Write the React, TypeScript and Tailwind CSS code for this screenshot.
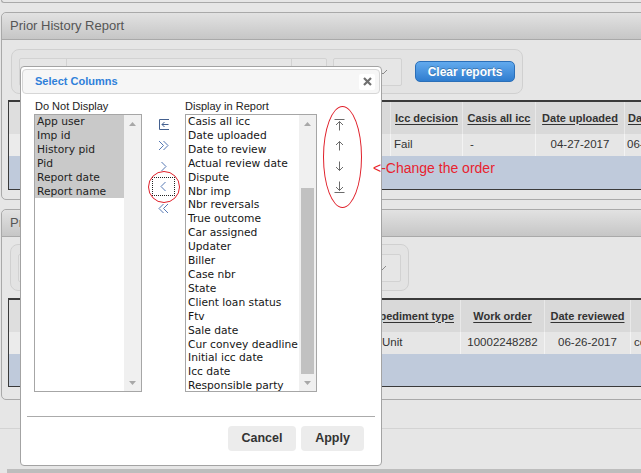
import React from "react";

const leftItems = ["App user", "Imp id", "History pid", "Pid", "Report date", "Report name"];
const rightItems = [
  "Casis all icc", "Date uploaded", "Date to review", "Actual review date", "Dispute", "Nbr imp",
  "Nbr reversals", "True outcome", "Car assigned", "Updater", "Biller", "Case nbr", "State",
  "Client loan status", "Ftv", "Sale date", "Cur convey deadline", "Initial icc date", "Icc date",
  "Responsible party",
];

function UpTri() {
  return (
    <svg width="7" height="4" viewBox="0 0 7 4">
      <path d="M0 4 L3.5 0 L7 4Z" fill="#a8a8a8" />
    </svg>
  );
}
function DownTri() {
  return (
    <svg width="7" height="4" viewBox="0 0 7 4">
      <path d="M0 0 L3.5 4 L7 0Z" fill="#a8a8a8" />
    </svg>
  );
}

function Scrollbar({ thumbTop, thumbH }: { thumbTop?: number; thumbH?: number }) {
  return (
    <div className="w-[17px] h-full bg-[#f0f0f0] flex flex-col">
      <div className="h-[17px] flex items-center justify-center">
        <UpTri />
      </div>
      <div className="flex-1 relative">
        {thumbH ? (
          <div
            className="absolute left-[2px] w-[13px] bg-[#c1c1c1]"
            style={{ top: thumbTop, height: thumbH }}
          />
        ) : null}
      </div>
      <div className="h-[17px] flex items-center justify-center">
        <DownTri />
      </div>
    </div>
  );
}

const chevColor = "#5578b4";

function IconReset() {
  return (
    <svg width="12" height="11" viewBox="0 0 12 11" fill="none" stroke="#44608f" strokeWidth="1">
      <path d="M1.5 0.5 H11" />
      <path d="M1.5 0.5 V10.5 H11" />
      <path d="M10.5 5.5 H4" />
      <path d="M6.5 3 L4 5.5 L6.5 8" />
    </svg>
  );
}
function DoubleRight() {
  return (
    <svg width="11" height="11" viewBox="0 0 11 11" fill="none" stroke={chevColor} strokeWidth="1">
      <path d="M1 1 L5.5 5.5 L1 10" />
      <path d="M5.5 1 L10 5.5 L5.5 10" />
    </svg>
  );
}
function DoubleLeft() {
  return (
    <svg width="11" height="11" viewBox="0 0 11 11" fill="none" stroke={chevColor} strokeWidth="1">
      <path d="M10 1 L5.5 5.5 L10 10" />
      <path d="M5.5 1 L1 5.5 L5.5 10" />
    </svg>
  );
}
function SingleRight() {
  return (
    <svg width="7" height="11" viewBox="0 0 7 11" fill="none" stroke={chevColor} strokeWidth="1">
      <path d="M1.5 1 L6 5.5 L1.5 10" />
    </svg>
  );
}
function SingleLeft() {
  return (
    <svg width="7" height="11" viewBox="0 0 7 11" fill="none" stroke={chevColor} strokeWidth="1">
      <path d="M5.5 1 L1 5.5 L5.5 10" />
    </svg>
  );
}

const arrowColor = "#6b6b6b";
function ToTop() {
  return (
    <svg width="11" height="13" viewBox="0 0 11 13" fill="none" stroke={arrowColor} strokeWidth="1">
      <path d="M0.5 1.5 H10.5" />
      <path d="M5.5 3.5 V12.5" />
      <path d="M2 7 L5.5 3.5 L9 7" />
    </svg>
  );
}
function Up() {
  return (
    <svg width="11" height="11" viewBox="0 0 11 11" fill="none" stroke={arrowColor} strokeWidth="1">
      <path d="M5.5 1.5 V10.5" />
      <path d="M2 5 L5.5 1.5 L9 5" />
    </svg>
  );
}
function Down() {
  return (
    <svg width="11" height="11" viewBox="0 0 11 11" fill="none" stroke={arrowColor} strokeWidth="1">
      <path d="M5.5 0.5 V9.5" />
      <path d="M2 6 L5.5 9.5 L9 6" />
    </svg>
  );
}
function ToBottom() {
  return (
    <svg width="11" height="13" viewBox="0 0 11 13" fill="none" stroke={arrowColor} strokeWidth="1">
      <path d="M5.5 0.5 V9.5" />
      <path d="M2 6 L5.5 9.5 L9 6" />
      <path d="M0.5 11.5 H10.5" />
    </svg>
  );
}

function HeaderCell({ w, children, align = "center" }: { w: string; children?: React.ReactNode; align?: string }) {
  const al =
    align === "end" ? "justify-end pr-[6px]" : align === "start" ? "justify-start pl-[3px]" : "justify-center";
  return (
    <div className={`${w} shrink-0 h-full flex items-center border-r border-[#e8e8e8] whitespace-nowrap ${al}`}>
      <span className="underline underline-offset-2">{children}</span>
    </div>
  );
}

function DataCell({ w, children, pl }: { w: string; children?: React.ReactNode; pl?: string }) {
  return (
    <div
      className={`${w} shrink-0 h-full flex items-center border-r border-[#f3f3f3] whitespace-nowrap ${
        pl ? pl : "justify-center"
      }`}
    >
      {children}
    </div>
  );
}

function PanelHeader({ title }: { title: string }) {
  return (
    <div className="h-[27px] border-b border-[#a9a9a9] rounded-t-[5px] bg-gradient-to-b from-[#e2e2e2] to-[#c6c6c6] flex items-center pl-[8px] text-[13px] text-[#555]">
      {title}
    </div>
  );
}

function SelectBox() {
  return (
    <div className="relative w-[69px] h-[28px] border border-[#d2d2d2] rounded-[2px] bg-[#e6e6e6]">
      <svg className="absolute left-[44px] top-[10px]" width="10" height="6" viewBox="0 0 10 6" fill="none" stroke="#8a8a8a" strokeWidth="1">
        <path d="M1 1 L5 5 L9 1" />
      </svg>
    </div>
  );
}

export default function App() {
  return (
    <div className="relative w-[641px] h-[473px] overflow-hidden bg-[#e6e6e6] font-['Liberation_Sans',Arial,sans-serif]">
      {/* top strip: end of previous panel */}
      <div className="ml-[1px] w-[660px] h-[3px] border-b border-l border-[#a9a9a9] rounded-bl-[4px]" />
      <div className="h-[9px]" />

      {/* Panel 1 */}
      <div className="ml-[1px] w-[660px] h-[188px] border border-[#a9a9a9] rounded-[5px] bg-[#e6e6e6] overflow-hidden">
        <PanelHeader title="Prior History Report" />
        <div className="pt-[9px]">
          <div className="ml-[9px] w-[512px] h-[45px] border border-[#d0d0d0] rounded-[8px] bg-[#e3e3e3] flex items-center pl-[7px]">
            <div className="flex h-[28px] border border-[#d2d2d2] rounded-[2px] bg-[#e6e6e6]">
              <div className="w-[47px] border-r border-[#d2d2d2]" />
              <div className="w-[225px] border-r border-[#d2d2d2]" />
              <div className="w-[34px]" />
            </div>
            <div className="ml-[6px]">
              <SelectBox />
            </div>
            <div className="ml-[13px] w-[100px] h-[21px] rounded-[5px] border border-[#2b6fb8] bg-gradient-to-b from-[#62aaee] to-[#2f7dcf] flex items-center justify-center text-white font-bold text-[12px] [text-shadow:0_-1px_0_rgba(0,0,0,0.25)]">
              Clear reports
            </div>
          </div>
          <div className="mt-[6px] ml-[6px] w-[660px] border-t-2 border-l border-b border-[#3a3a3a] bg-[#bfcadb]">
            <div className="flex h-[32px] bg-[#d9d9d9] text-[11px] font-bold text-[#333]">
              <div className="w-[13px] shrink-0 border-r border-[#ececec] bg-[#dedede]" />
              <div className="w-[369px] shrink-0 border-r border-[#e8e8e8]" />
              <HeaderCell w="w-[72px]">Icc decision</HeaderCell>
              <HeaderCell w="w-[73px]">Casis all icc</HeaderCell>
              <HeaderCell w="w-[89px]">Date uploaded</HeaderCell>
              <HeaderCell w="w-[80px]" align="start">Date reviewed</HeaderCell>
            </div>
            <div className="flex h-[22px] bg-[#e6e6e6] text-[11.5px] text-[#333]">
              <div className="w-[13px] shrink-0 border-r border-[#f3f3f3] bg-[#ebebeb]" />
              <div className="w-[369px] shrink-0 border-r border-[#f3f3f3]" />
              <DataCell w="w-[72px]" pl="pl-[3px]">Fail</DataCell>
              <DataCell w="w-[73px]" pl="pl-[7px]">-</DataCell>
              <DataCell w="w-[89px]">04-27-2017</DataCell>
              <DataCell w="w-[80px]" pl="pl-[2px]">06-26-2017</DataCell>
            </div>
            <div className="h-[33px]" />
          </div>
        </div>
      </div>

      <div className="h-[9px]" />

      {/* Panel 2 */}
      <div className="ml-[1px] w-[660px] h-[191px] border border-[#a9a9a9] rounded-[5px] bg-[#e6e6e6] overflow-hidden">
        <PanelHeader title="Prior Impediments" />
        <div className="pt-[7px]">
          <div className="ml-[8px] w-[399px] h-[47px] border border-[#d0d0d0] rounded-[8px] bg-[#e3e3e3] flex items-center pl-[7px]">
            <div className="flex h-[28px] border border-[#d2d2d2] rounded-[2px] bg-[#e6e6e6]">
              <div className="w-[47px] border-r border-[#d2d2d2]" />
              <div className="w-[225px] border-r border-[#d2d2d2]" />
              <div className="w-[34px]" />
            </div>
            <div className="ml-[6px]">
              <SelectBox />
            </div>
          </div>
          <div className="mt-[7px] ml-[6px] w-[660px] border-t-2 border-l border-b border-[#3a3a3a] bg-[#bfcadb]">
            <div className="flex h-[32px] bg-[#d9d9d9] text-[11px] font-bold text-[#333]">
              <div className="w-[13px] shrink-0 border-r border-[#ececec] bg-[#dedede]" />
              <div className="w-[357px] shrink-0 border-r border-[#e8e8e8]" />
              <HeaderCell w="w-[82px]" align="end">Impediment type</HeaderCell>
              <HeaderCell w="w-[84px]">Work order</HeaderCell>
              <HeaderCell w="w-[86px]">Date reviewed</HeaderCell>
              <HeaderCell w="w-[60px]"></HeaderCell>
            </div>
            <div className="flex h-[22px] bg-[#e6e6e6] text-[11.5px] text-[#333]">
              <div className="w-[13px] shrink-0 border-r border-[#f3f3f3] bg-[#ebebeb]" />
              <div className="w-[357px] shrink-0 border-r border-[#f3f3f3]" />
              <DataCell w="w-[82px]" pl="pl-[3px]">Unit</DataCell>
              <DataCell w="w-[84px]">10002248282</DataCell>
              <DataCell w="w-[86px]">06-26-2017</DataCell>
              <DataCell w="w-[60px]" pl="pl-[3px]">complete</DataCell>
            </div>
            <div className="h-[32px]" />
          </div>
        </div>
      </div>

      {/* bottom page area */}
      <div className="mt-[28px] h-[1px] bg-[#d3d3d3]" />
      <div className="absolute left-[7px] top-[469px] w-[640px] h-[4px] bg-[#bdbdbd]" />

      {/* Dialog */}
      <div className="absolute left-[20px] top-[66px] w-[362px] h-[400px] border border-[#a3a3a3] rounded-[4px] bg-white px-[1px] pt-[2px]">
        <div className="h-[25px] border border-[#d6d6d6] rounded-[4px] bg-[#f6f6f6] flex items-center justify-between pl-[12px] pr-[4px]">
          <span className="text-[11px] font-bold text-[#2f80da]">Select Columns</span>
          <div className="w-[16px] h-[16px] bg-white rounded-[2px] flex items-center justify-center">
            <svg width="9" height="9" viewBox="0 0 9 9" stroke="#707070" strokeWidth="2.2" strokeLinecap="butt">
              <path d="M1 1 L8 8 M8 1 L1 8" />
            </svg>
          </div>
        </div>

        <div className="mt-[6px] h-[14px] flex text-[11px] leading-[13px] text-[#222]">
          <div className="ml-[13px] w-[150px]">Do Not Display</div>
          <div className="">Display in Report</div>
        </div>

        <div className="flex">
          {/* left list */}
          <div className="ml-[12px] w-[108px] h-[278px] border border-[#a6a6a6] flex font-['DejaVu_Sans',sans-serif] text-[10.7px] leading-[13.9px] text-[#222]">
            <div className="flex-1">
              {leftItems.map((t) => (
                <div key={t} className="bg-[#c9c9c9] pl-[2px] whitespace-nowrap">
                  {t}
                </div>
              ))}
            </div>
            <Scrollbar />
          </div>

          {/* middle buttons */}
          <div className="w-[43px] flex flex-col items-center">
            <div className="h-[21px] flex items-center justify-center">
              <IconReset />
            </div>
            <div className="h-[21px] flex items-center justify-center">
              <DoubleRight />
            </div>
            <div className="h-[21px] flex items-center justify-center">
              <SingleRight />
            </div>
            <div className="h-[19px] w-[23px] mb-[2px] border border-dotted border-[#222] flex items-center justify-center">
              <SingleLeft />
            </div>
            <div className="h-[21px] flex items-center justify-center">
              <DoubleLeft />
            </div>
          </div>

          {/* right list */}
          <div className="w-[132px] h-[278px] border border-[#a6a6a6] flex font-['DejaVu_Sans',sans-serif] text-[10.7px] leading-[13.9px] text-[#161616]">
            <div className="flex-1 overflow-hidden">
              {rightItems.map((t) => (
                <div key={t} className="pl-[2px] whitespace-nowrap">
                  {t}
                </div>
              ))}
            </div>
            <Scrollbar thumbTop={56} thumbH={186} />
          </div>

          {/* order arrows */}
          <div className="w-[45px] flex flex-col items-center">
            <div className="h-[21px] flex items-center justify-center">
              <ToTop />
            </div>
            <div className="h-[21px] flex items-center justify-center">
              <Up />
            </div>
            <div className="h-[21px] flex items-center justify-center">
              <Down />
            </div>
            <div className="h-[21px] flex items-center justify-center">
              <ToBottom />
            </div>
          </div>
        </div>

        {/* footer */}
        <div className="mt-[24px] mx-[5px] h-[1px] bg-[#ababab]" />
        <div className="mt-[9px] flex justify-end gap-[5px] pr-[16px]">
          <div className="w-[68px] h-[25px] rounded-[4px] bg-[#ececec] flex items-center justify-center text-[12.5px] font-bold text-[#333]">
            Cancel
          </div>
          <div className="w-[63px] h-[25px] rounded-[4px] bg-[#ececec] flex items-center justify-center text-[12.5px] font-bold text-[#333]">
            Apply
          </div>
        </div>

        {/* red annotation ellipses */}
        <div className="absolute left-[127px] top-[104px] w-[32px] h-[32px] rounded-[50%] border border-[#e0202a]" />
        <div className="absolute left-[302px] top-[39px] w-[39px] h-[102px] rounded-[50%] border border-[#e0202a]" />
      </div>

      {/* annotation text, drawn over the dialog */}
      <div className="absolute left-[373px] top-[160px] text-[14px] leading-[16px] text-[#e8232f] whitespace-nowrap">
        &lt;-Change the order
      </div>
    </div>
  );
}
